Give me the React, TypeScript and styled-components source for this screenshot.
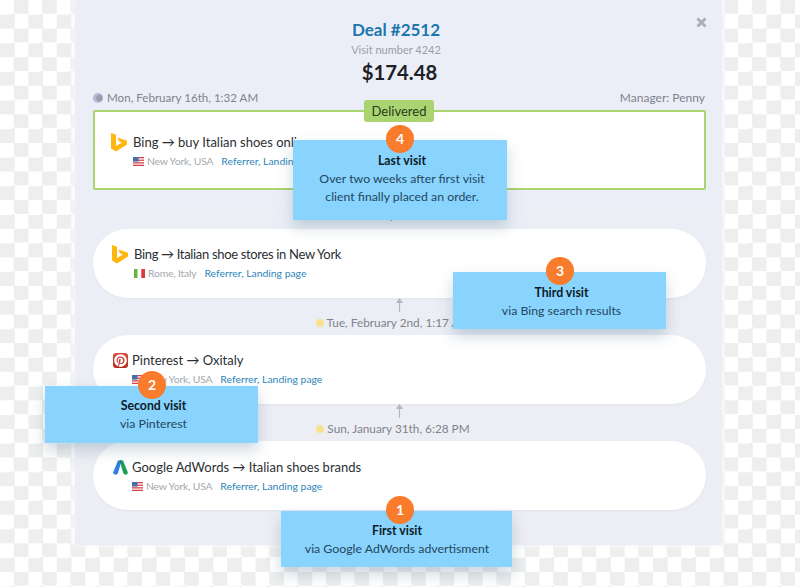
import React from "react";
import styled, { createGlobalStyle } from "styled-components";
import { FaPinterest } from "react-icons/fa";

const Global = createGlobalStyle`
  html, body { margin: 0; padding: 0; background: #fff; }
  * { box-sizing: border-box; }
`;

const Page = styled.div`
  position: relative;
  width: 800px;
  height: 587px;
  overflow: hidden;
  font-family: "Lato", "Noto Sans", sans-serif;
  background-color: #fff;
  background-image: repeating-conic-gradient(#eeeeee 0 25%, #ffffff 0 50%);
  background-size: 28.4px 28.6px;
  padding-left: 75px;
`;

const Panel = styled.main`
  width: 647px;
  height: 545px;
  background: linear-gradient(#ebeef8, #edeef3);
  box-shadow: 0 0 4px 2px rgba(246, 247, 251, 0.9);
  padding: 18px 17px 0 18px;
  display: flex;
  flex-direction: column;
`;

const Header = styled.header`
  display: flex;
  flex-direction: column;
  align-items: center;
  margin-bottom: 3px;
`;

const Title = styled.h1`
  margin: 0 6px 0 0;
  font-size: 17px;
  line-height: 24px;
  font-weight: 700;
  color: #1b76ad;
`;

const VisitNumber = styled.div`
  margin-right: 6px;
  font-size: 11px;
  line-height: 15px;
  color: #9a9ea6;
`;

const Price = styled.div`
  margin-left: 1px;
  font-size: 20.3px;
  line-height: 30px;
  font-weight: 700;
  color: #1c2127;
`;

const Close = styled.button`
  position: absolute;
  left: 696px;
  top: 17px;
  width: 11px;
  height: 11px;
  padding: 0;
  border: 0;
  background: none;
  display: flex;
`;

const MetaRow = styled.div`
  display: flex;
  justify-content: space-between;
  align-items: center;
  font-size: 12px;
  line-height: 16px;
  color: #7f838b;
  margin-bottom: 4px;
`;

const MetaLeft = styled.span`
  display: flex;
  align-items: center;
  gap: 4px;
  font-size: 11.6px;
`;

const Card = styled.section<{ $delivered?: boolean; $top?: number }>`
  width: 613px;
  background: #fff;
  display: flex;
  align-items: flex-start;
  ${(p) =>
    p.$delivered
      ? `height: 80px;
         border: 2px solid #a9d46f;
         border-radius: 2px;
         padding: 20px 0 0 16px;`
      : `height: 69px;
         border-radius: 35px;
         padding: ${p.$top ?? 15}px 0 0 19px;
         box-shadow: 0 1px 2px rgba(120, 130, 150, 0.08);`}
`;

const IconSlot = styled.span<{ $gap: number }>`
  width: 16px;
  height: 20px;
  display: flex;
  align-items: center;
  justify-content: flex-end;
  margin-right: ${(p) => p.$gap}px;
  flex: none;
`;

const CardBody = styled.div`
  display: flex;
  flex-direction: column;
`;

const CardTitle = styled.div<{ $tight?: boolean }>`
  font-size: 13px;
  line-height: 20px;
  color: #2b2f33;
  white-space: nowrap;
  letter-spacing: ${(p) => (p.$tight ? "-0.33px" : "0")};
`;

const CardSub = styled.div`
  display: flex;
  align-items: center;
  font-size: 10.4px;
  line-height: 16px;
  margin-top: 1px;
  white-space: nowrap;
`;

const Location = styled.span`
  color: #a5a8ae;
  margin-left: 3px;
  margin-right: 8px;
  letter-spacing: -0.2px;
`;

const SourceLink = styled.a`
  color: #2e84b8;
`;

const Gap = styled.div<{ $height: number }>`
  height: ${(p) => p.$height}px;
  display: flex;
  flex-direction: column;
  align-items: center;
`;

const DateLine = styled.div`
  display: flex;
  align-items: center;
  gap: 3px;
  font-size: 11.8px;
  line-height: 16px;
  color: #7f838b;
  margin-top: 3px;
  margin-right: 12px;
`;

const SunDot = styled.span`
  width: 8px;
  height: 8px;
  border-radius: 50%;
  background: #f7e08e;
`;

const Delivered = styled.div`
  position: absolute;
  left: 364px;
  top: 100px;
  width: 70px;
  height: 22px;
  background: #a9d46f;
  border-radius: 3px;
  font-size: 13px;
  line-height: 22px;
  text-align: center;
  color: #2a3a20;
`;

const Note = styled.aside<{ $left: number; $top: number; $width: number; $height: number; $padTop: number; $padLeft: number }>`
  position: absolute;
  left: ${(p) => p.$left}px;
  top: ${(p) => p.$top}px;
  width: ${(p) => p.$width}px;
  height: ${(p) => p.$height}px;
  background: #88d4fe;
  box-shadow: 0 7px 14px rgba(70, 110, 140, 0.28);
  padding-top: ${(p) => p.$padTop}px;
  padding-left: ${(p) => p.$padLeft}px;
  text-align: center;
  font-size: 12.3px;
  line-height: 18px;
  color: #25465c;
`;

const NoteTitle = styled.div`
  font-weight: 700;
  color: #0d1c28;
`;

const Step = styled.span<{ $center: number }>`
  position: absolute;
  left: ${(p) => p.$center - 14}px;
  top: -15px;
  width: 28px;
  height: 28px;
  border-radius: 50%;
  background: #f97b2c;
  color: #fff;
  font-size: 14px;
  font-weight: 700;
  line-height: 28px;
  text-align: center;
`;

const PinterestTile = styled.span`
  width: 15px;
  height: 15px;
  border-radius: 3px;
  background: linear-gradient(#d9503f, #b32a20);
  color: #fff;
  display: flex;
  align-items: center;
  justify-content: center;
`;

const BingIcon = () => (
  <svg width="16" height="19" viewBox="0 0 16 19">
    <path d="M0 0 L5 1.8 V13 L11 9.6 L8 8.3 L6.4 4.4 L16 7.8 V11.6 L5 18.5 L0 15.4 Z" fill="#ffb60f" />
  </svg>
);

const AdWordsIcon = () => (
  <svg width="15" height="15" viewBox="0 0 15 15">
    <path d="M5 0.4 H8.6 L5 13 Q4.4 14.8 2.4 14.8 Q-0.3 14.6 0.3 12 Z" fill="#2f7fe0" />
    <path d="M6.6 0.4 H10 L14.7 12 Q15.2 14.6 12.8 14.8 Q10.9 14.8 10.2 13 Z" fill="#1f9d57" />
    <path d="M6.6 0.4 H8.6 L7.6 4 Z" fill="#1c6a92" />
  </svg>
);

const UsFlag = () => (
  <svg width="11" height="9" viewBox="0 0 11 9">
    <rect width="11" height="9" fill="#fff" />
    <rect y="0" width="11" height="1.3" fill="#d8434a" />
    <rect y="2.6" width="11" height="1.3" fill="#d8434a" />
    <rect y="5.2" width="11" height="1.3" fill="#d8434a" />
    <rect y="7.7" width="11" height="1.3" fill="#d8434a" />
    <rect width="5.5" height="4.6" fill="#4a6fa8" />
  </svg>
);

const ItFlag = () => (
  <svg width="11" height="9" viewBox="0 0 11 9">
    <rect width="3.7" height="9" fill="#6cb33f" />
    <rect x="3.7" width="3.6" height="9" fill="#fff" />
    <rect x="7.3" width="3.7" height="9" fill="#dc3a3a" />
  </svg>
);

const UpArrow = () => (
  <svg width="9" height="14" viewBox="0 0 9 14">
    <path d="M4.5 4 V14" stroke="#b4b7bd" strokeWidth="1.2" />
    <path d="M4.5 0 L8 5 H1 Z" fill="#b4b7bd" />
  </svg>
);

const Moon = () => (
  <svg width="10" height="10" viewBox="0 0 10 10">
    <circle cx="5" cy="5" r="5" fill="#bcb6d6" />
    <circle cx="6.4" cy="5" r="3.2" fill="#9a9cae" />
  </svg>
);

const CloseIcon = () => (
  <svg width="11" height="11" viewBox="0 0 11 11">
    <path d="M1.5 1.5 L9.5 9.5 M9.5 1.5 L1.5 9.5" stroke="#a9adb4" strokeWidth="2.8" />
  </svg>
);

type Visit = {
  icon: React.ReactNode;
  gap: number;
  title: string;
  tight?: boolean;
  flag: React.ReactNode;
  place: string;
  delivered?: boolean;
  top?: number;
  date?: string;
  gapHeight?: number;
};

const visits: Visit[] = [
  { icon: <BingIcon />, gap: 6, title: "Bing → buy Italian shoes online", flag: <UsFlag />, place: "New York, USA", delivered: true, date: "Sun, February 14th, 9:46 AM", gapHeight: 39 },
  { icon: <BingIcon />, gap: 6, title: "Bing → Italian shoe stores in New York", tight: true, flag: <ItFlag />, place: "Rome, Italy", date: "Tue, February 2nd, 1:17 AM", gapHeight: 37 },
  {
    icon: (
      <PinterestTile>
        <FaPinterest size={13} />
      </PinterestTile>
    ),
    gap: 4,
    title: "Pinterest → Oxitaly",
    flag: <UsFlag />,
    place: "New York, USA",
    date: "Sun, January 31th, 6:28 PM",
    gapHeight: 37,
  },
  { icon: <AdWordsIcon />, gap: 4, top: 16, title: "Google AdWords → Italian shoes brands", flag: <UsFlag />, place: "New York, USA" },
];

const notes = [
  { n: 4, left: 293, top: 140, width: 214, height: 80, padTop: 12, padLeft: 4, center: 107, title: "Last visit", lines: ["Over two weeks after first visit", "client finally placed an order."] },
  { n: 3, left: 453, top: 272, width: 213, height: 57, padTop: 12, padLeft: 4, center: 107, title: "Third visit", lines: ["via Bing search results"] },
  { n: 2, left: 45, top: 386, width: 213, height: 57, padTop: 11, padLeft: 4, center: 107, title: "Second visit", lines: ["via Pinterest"] },
  { n: 1, left: 281, top: 511, width: 231, height: 56, padTop: 11, padLeft: 1, center: 119, title: "First visit", lines: ["via Google AdWords advertisment"] },
];

export default function App() {
  return (
    <Page>
      <Global />
      <Panel>
        <Header>
          <Title>Deal #2512</Title>
          <VisitNumber>Visit number 4242</VisitNumber>
          <Price>$174.48</Price>
        </Header>
        <MetaRow>
          <MetaLeft>
            <Moon />
            Mon, February 16th, 1:32 AM
          </MetaLeft>
          <span>Manager: Penny</span>
        </MetaRow>
        {visits.map((v) => (
          <React.Fragment key={v.title}>
            <Card $delivered={v.delivered} $top={v.top}>
              <IconSlot $gap={v.gap}>{v.icon}</IconSlot>
              <CardBody>
                <CardTitle $tight={v.tight}>{v.title}</CardTitle>
                <CardSub>
                  {v.flag}
                  <Location>{v.place}</Location>
                  <SourceLink>Referrer, Landing page</SourceLink>
                </CardSub>
              </CardBody>
            </Card>
            {v.date && (
              <Gap $height={v.gapHeight ?? 37}>
                <UpArrow />
                <DateLine>
                  <SunDot />
                  {v.date}
                </DateLine>
              </Gap>
            )}
          </React.Fragment>
        ))}
      </Panel>
      <Close aria-label="Close">
        <CloseIcon />
      </Close>
      <Delivered>Delivered</Delivered>
      {notes.map((n) => (
        <Note key={n.n} $left={n.left} $top={n.top} $width={n.width} $height={n.height} $padTop={n.padTop} $padLeft={n.padLeft}>
          <Step $center={n.center}>{n.n}</Step>
          <NoteTitle>{n.title}</NoteTitle>
          {n.lines.map((l) => (
            <div key={l}>{l}</div>
          ))}
        </Note>
      ))}
    </Page>
  );
}
